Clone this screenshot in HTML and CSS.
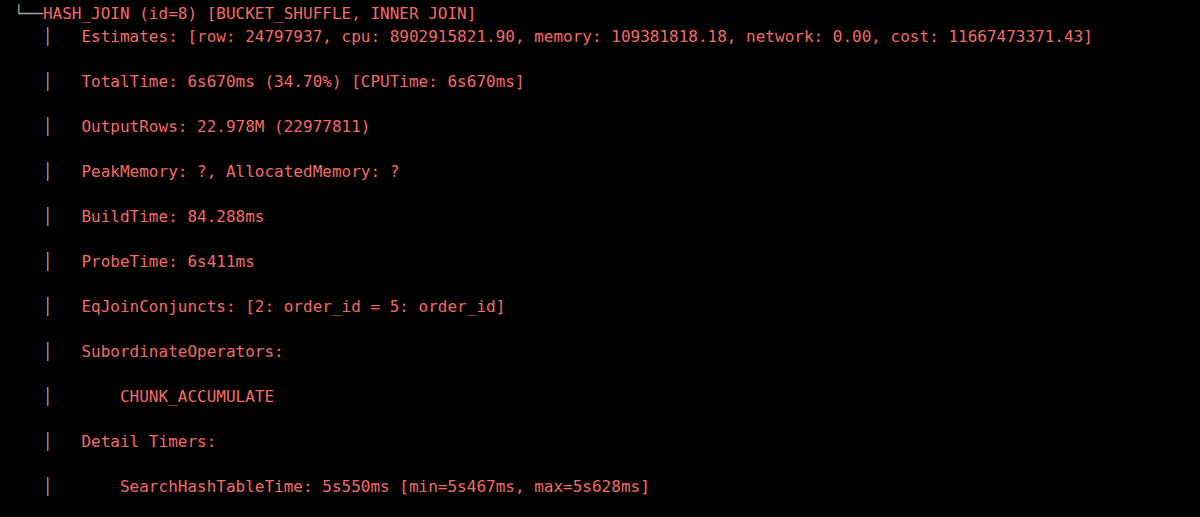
FILE: index.html
```html
<!DOCTYPE html>
<html lang="en">
<head>
<meta charset="utf-8">
<title>Profile</title>
<link rel="stylesheet" href="styles.css">
</head>
<body>
<div class="profile">
<div class="line"><span class="tree">└──</span>HASH_JOIN (id=8) [BUCKET_SHUFFLE, INNER JOIN]</div>
<div class="line"><span class="tree">   │   </span>Estimates: [row: 24797937, cpu: 8902915821.90, memory: 109381818.18, network: 0.00, cost: 11667473371.43]</div>
<div class="line"> </div>
<div class="line"><span class="tree">   │   </span>TotalTime: 6s670ms (34.70%) [CPUTime: 6s670ms]</div>
<div class="line"> </div>
<div class="line"><span class="tree">   │   </span>OutputRows: 22.978M (22977811)</div>
<div class="line"> </div>
<div class="line"><span class="tree">   │   </span>PeakMemory: ?, AllocatedMemory: ?</div>
<div class="line"> </div>
<div class="line"><span class="tree">   │   </span>BuildTime: 84.288ms</div>
<div class="line"> </div>
<div class="line"><span class="tree">   │   </span>ProbeTime: 6s411ms</div>
<div class="line"> </div>
<div class="line"><span class="tree">   │   </span>EqJoinConjuncts: [2: order_id = 5: order_id]</div>
<div class="line"> </div>
<div class="line"><span class="tree">   │   </span>SubordinateOperators:</div>
<div class="line"> </div>
<div class="line"><span class="tree">   │       </span>CHUNK_ACCUMULATE</div>
<div class="line"> </div>
<div class="line"><span class="tree">   │   </span>Detail Timers:</div>
<div class="line"> </div>
<div class="line"><span class="tree">   │       </span>SearchHashTableTime: 5s550ms [min=5s467ms, max=5s628ms]</div>
</div>
</body>
</html>
```
FILE: styles.css
```css
html, body {
  margin: 0;
  padding: 0;
  background: #000;
}
body {
  overflow: hidden;
}
.profile {
  padding: 3px 0 0 14px;
  font-family: "DejaVu Sans Mono", "Liberation Mono", monospace;
  font-size: 16px;
  line-height: 22.5px;
  color: #f46a66;
}
.line {
  white-space: pre;
  height: 22.5px;
}
.tree {
  color: #a3a3a3;
}
```
